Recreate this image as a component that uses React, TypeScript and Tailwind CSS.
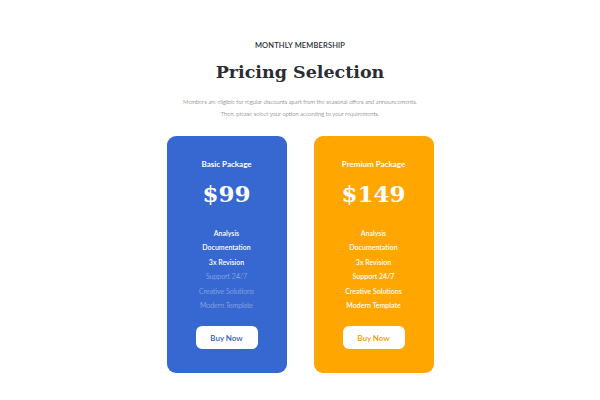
const BASIC = [
  { label: "Analysis", on: true },
  { label: "Documentation", on: true },
  { label: "3x Revision", on: true },
  { label: "Support 24/7", on: false },
  { label: "Creative Solutions", on: false },
  { label: "Modern Template", on: false },
];

const PREMIUM = BASIC.map((f) => ({ ...f, on: true }));

export default function App() {
  return (
    <div className="h-[400px] w-[600px] bg-white font-['Lato','Liberation_Sans',sans-serif] text-[#2b2d33]">
      <div className="flex flex-col items-center pt-[41px]">
        <div className="text-[7.5px] font-semibold uppercase leading-[10px] tracking-[0.02em]">
          Monthly Membership
        </div>
        <h1 className="mt-[8px] font-['DejaVu_Serif','Liberation_Serif',serif] text-[17.5px] font-bold leading-[26px]">
          Pricing Selection
        </h1>
        <div className="mt-[11px] flex flex-col items-center text-[5.8px] font-light leading-[12px] text-[#444]">
          <p>Members are eligible for regular discounts apart from the seasonal offers and announcements.</p>
          <p>Then, please select your option according to your requirements.</p>
        </div>

        <div className="mt-[16px] flex gap-[27px]">
          <PlanCard
            name="Basic Package"
            price="$99"
            features={BASIC}
            bg="bg-[#3768d1]"
            btnText="text-[#2f5cc0]"
          />
          <PlanCard
            name="Premium Package"
            price="$149"
            features={PREMIUM}
            bg="bg-[#ffa600]"
            btnText="text-[#f29a00]"
          />
        </div>
      </div>
    </div>
  );
}

function PlanCard({
  name,
  price,
  features,
  bg,
  btnText,
}: {
  name: string;
  price: string;
  features: { label: string; on: boolean }[];
  bg: string;
  btnText: string;
}) {
  return (
    <div className={`flex h-[237px] w-[120px] flex-col items-center rounded-[9px] pt-[22px] text-white ${bg}`}>
      <div className="text-[8px] font-bold leading-[12px]">{name}</div>
      <div className="mt-[8px] font-['DejaVu_Serif','Liberation_Serif',serif] text-[23px] font-bold leading-[32px]">
        {price}
      </div>
      <ul className="mt-[16px] flex flex-col items-center">
        {features.map((f) => (
          <li
            key={f.label}
            className={`text-[7px] leading-[14.4px] ${f.on ? "font-semibold text-white" : "font-light text-white/55"}`}
          >
            {f.label}
          </li>
        ))}
      </ul>
      <button
        className={`mt-[14px] h-[23px] w-[62px] rounded-[6px] bg-white text-[8px] font-semibold ${btnText}`}
      >
        Buy Now
      </button>
    </div>
  );
}
